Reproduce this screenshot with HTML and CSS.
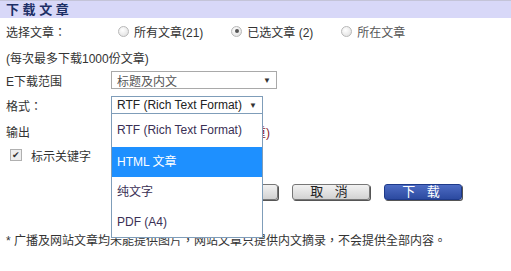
FILE: index.html
```html
<!DOCTYPE html>
<html lang="zh-Hant">
<head>
  <meta charset="UTF-8">
  <meta name="viewport" content="width=device-width, initial-scale=1.0">
  <link rel="stylesheet" href="styles.css">
  <title>下载文章</title>
</head>
<body>

  <div class="header">下 载 文 章</div>

  <div class="content">

    <div class="row row-choose">
      <span class="label-wide">选择文章：</span>
      <label class="radio"><span class="dot"></span>所有文章(21)</label>
      <label class="radio"><span class="dot on"></span>已选文章 (2)</label>
      <label class="radio muted"><span class="dot"></span>所在文章</label>
    </div>

    <div class="row row-note">(每次最多下载1000份文章)</div>

    <div class="row row-range">
      <span class="label">E下载范围</span>
      <div class="select plain">
        <span>标题及内文</span>
        <span class="arrow">&#9660;</span>
      </div>
    </div>

    <div class="row row-format">
      <span class="label">格式：</span>
      <div class="select active">
        <span>RTF (Rich Text Format)</span>
        <span class="arrow">&#9660;</span>
      </div>
    </div>

    <div class="row row-output">
      <span class="label">输出</span>
      <span class="warn">(以新视窗显示，内容较重)</span>
    </div>

    <div class="row row-keyword">
      <span class="check">&#10004;</span>
      <span>标示关键字</span>
    </div>

    <div class="buttons">
      <button class="btn">重 设</button>
      <button class="btn">取 消</button>
      <button class="btn primary">下 载</button>
    </div>

    <p class="footnote">* 广播及网站文章均未能提供图片，网站文章只提供内文摘录，不会提供全部内容。</p>

  </div>

  <ul class="options">
    <li>RTF (Rich Text Format)</li>
    <li class="selected">HTML 文章</li>
    <li>纯文字</li>
    <li>PDF (A4)</li>
  </ul>

</body>
</html>
```

FILE: styles.css
```css
body {
  font-family: 'Liberation Sans', Arial, 'Noto Sans CJK SC', sans-serif;
  font-size: 12px;
  color: #333;
  margin: 0;
  background: #fff;
}

.header {
  height: 17px;
  line-height: 17px;
  background: #d8d8f8;
  border-top: 1px solid #c4c4d8;
  color: #1d2f66;
  font-weight: bold;
  font-size: 13px;
  padding-left: 6px;
}

.content {
  padding: 0 6px;
}

.row {
  display: flex;
  align-items: center;
  white-space: nowrap;
}

.row-choose { height: 26px; }
.row-note { height: 26px; }
.row-range { height: 20px; }
.row-format { height: 30px; }
.row-output { height: 22px; }
.row-keyword { height: 26px; padding-left: 4px; }

.label-wide {
  width: 112px;
  flex-shrink: 0;
}

.label {
  width: 105px;
  flex-shrink: 0;
}

.radio {
  display: flex;
  align-items: center;
  flex-shrink: 0;
  margin-right: 28px;
}

.radio.muted {
  color: #555;
}

.dot {
  width: 9px;
  height: 9px;
  border: 1px solid #b8b8b8;
  border-radius: 50%;
  background: radial-gradient(circle at 40% 35%, #fff, #dcdcdc);
  margin-right: 5px;
  position: relative;
}

.dot.on::after {
  content: '';
  position: absolute;
  left: 2.5px;
  top: 2.5px;
  width: 4px;
  height: 4px;
  border-radius: 50%;
  background: #555;
}

.select {
  display: flex;
  justify-content: space-between;
  align-items: center;
  box-sizing: border-box;
  height: 18px;
  padding: 0 5px;
}

.select.plain {
  width: 166px;
  border: 1px solid #a9a9a9;
  color: #555;
}

.select.active {
  width: 152px;
  border: 1px solid #7f9db9;
  color: #222;
}

.arrow {
  font-size: 8px;
  color: #333;
}

.warn {
  width: 159px;
  text-align: right;
  color: #8b1a2a;
  overflow: hidden;
}

.check {
  width: 10px;
  height: 10px;
  border: 1px solid #b0b0b0;
  background: #eee;
  font-size: 9px;
  line-height: 10px;
  text-align: center;
  color: #333;
  margin-right: 9px;
}

.buttons {
  display: flex;
  gap: 14px;
  margin-top: 16px;
  margin-left: 194px;
}

.btn {
  width: 78px;
  height: 16px;
  padding: 0;
  font-family: inherit;
  font-size: 13px;
  line-height: 14px;
  color: #222;
  letter-spacing: 4px;
  border: 1px solid #777;
  border-radius: 3px;
  background: linear-gradient(#f2f2f2, #d2d2d2);
  box-shadow: 1px 1px 0 #555;
}

.btn.primary {
  color: #fff;
  border-color: #1e3a8a;
  background: linear-gradient(#4d6cc4, #2c4aa0);
}

.footnote {
  margin: 32px 0 0;
  line-height: 18px;
  white-space: nowrap;
}

.options {
  position: absolute;
  left: 111px;
  top: 113px;
  width: 150px;
  margin: 0;
  padding: 0;
  list-style: none;
  background: #fff;
  border: 1px solid #7f9db9;
  color: #3a3055;
  font-size: 12px;
}

.options li {
  height: 30px;
  line-height: 30px;
  padding-left: 5px;
  white-space: nowrap;
}

.options li:first-child {
  height: 33px;
  line-height: 33px;
}

.options li.selected {
  background: #1e90ff;
  color: #fff;
}
```
